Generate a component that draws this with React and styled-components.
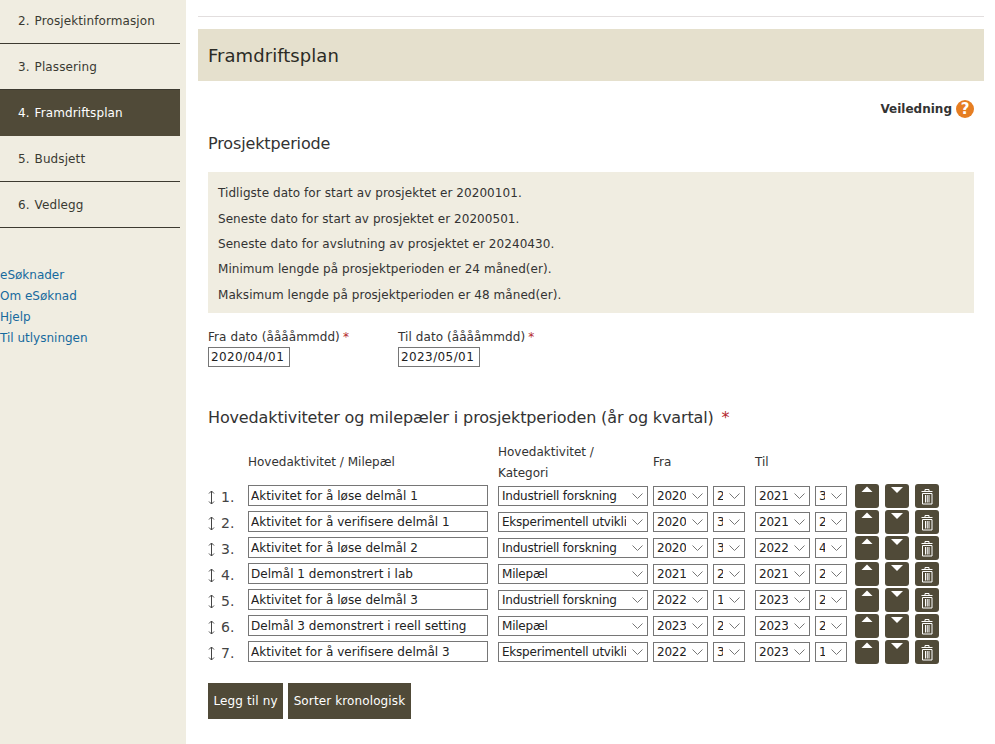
import React from "react";
import styled, { createGlobalStyle } from "styled-components";

const Global = createGlobalStyle`
  html, body { margin: 0; padding: 0; height: 744px; overflow: hidden; background: #fff; }
  body { font-family: "DejaVu Sans", Verdana, sans-serif; font-size: 12px; color: #333; }
  * { box-sizing: border-box; }
`;
const Page = styled.div`display: flex; height: 744px; overflow: hidden;`;
const Sidebar = styled.aside`width: 186px; flex: none; background: #f0ede1; height: 100%;`;
const Steps = styled.ul`list-style: none; margin: -2px 6px 0 0; padding: 0;`;
const Step = styled.li`
  height: 46px; display: flex; align-items: center; padding: 1px 0 0 18px;
  border-bottom: 1px solid ${p => (p.$active ? "#504a38" : "#3d3a30")};
  background: ${p => (p.$active ? "#504a38" : "transparent")};
  color: ${p => (p.$active ? "#fff" : "#3a3a32")};
  font-size: 12px; letter-spacing: .1px; word-spacing: 1px;
`;
const Links = styled.nav`display: flex; flex-direction: column; margin-top: 37px;`;
const SideLink = styled.a`color: #176a9e; line-height: 21px; font-size: 12px;`;
const Main = styled.main`flex: 1; padding: 16px 11px 0 12px; min-width: 0;`;
const TopRule = styled.div`border-top: 1px solid #e2dede; height: 13px;`;
const Banner = styled.h1`
  margin: 0; height: 52px; display: flex; align-items: center; padding-left: 10px;
  background: #e5e0cd; font-size: 18px; font-weight: 400; color: #2b2b25; letter-spacing: .05px;
`;
const Content = styled.div`padding: 0 10px;`;
const HelpRow = styled.div`display: flex; justify-content: flex-end; align-items: center; gap: 4px; height: 20px; margin-top: 18px;`;
const HelpText = styled.strong`font-size: 12px; color: #333;`;
const HelpIcon = styled.span`
  width: 18px; height: 18px; border-radius: 50%; background: #e67e22; color: #fff;
  display: flex; align-items: center; justify-content: center; font-weight: 700; font-size: 15px;
`;
const H2 = styled.h2`margin: ${p => p.$mt || 0}px 0 0; font-size: 16px; font-weight: 400; color: #333; line-height: 20px; letter-spacing: -.14px;`;
const InfoBox = styled.div`
  margin-top: 18px; background: #f0ede1; padding: 9.2px 10px 0; height: 141px;
`;
const InfoLine = styled.p`margin: 0; height: 25.4px; line-height: 25px; font-size: 12px; color: #333; letter-spacing: .06px;`;
const DateRow = styled.div`display: flex; gap: 108px; margin-top: 15px;`;
const DateField = styled.div`display: flex; flex-direction: column; width: 82px; white-space: nowrap;`;
const FieldLabel = styled.label`line-height: 19px; font-size: 12px; color: #333; letter-spacing: .08px;`;
const Star = styled.span`color: #b3282d; margin-left: 3px;`;
const TextInput = styled.input`
  font: 12px "DejaVu Sans", Verdana, sans-serif; color: #222; background: #fff; letter-spacing: .03px;
  border: 1px solid #767676; border-radius: 0; outline: none; padding: 0 2px;
  height: ${p => p.$h || 20}px; width: ${p => p.$w}px; flex: none; display: block;
`;
const DateInput = styled(TextInput)`letter-spacing: .4px;`;
const Row = styled.div`display: flex; align-items: center;`;
const HeadRow = styled(Row)`height: 44px; margin-top: 13px; align-items: flex-start;`;
const HeadCell = styled.div`
  width: ${p => p.$w}px; margin-left: ${p => p.$ml || 0}px; margin-top: ${p => p.$mt || 0}px; flex: none; line-height: 21px; font-size: 12px; color: #333;
`;
const ActRow = styled(Row)`height: 26px; align-items: flex-start;`;
const Num = styled.div`
  width: 40px; flex: none; height: 21px; display: flex; align-items: center; font-size: 14px; color: #444; padding-top: 3px;
`;
const Arrow = styled.svg`width: 7px; height: 15px; margin: 1px 6px 0 0; flex: none;`;
const SelectWrap = styled.div`position: relative; width: ${p => p.$w}px; height: 20px; margin-left: ${p => p.$ml}px; margin-top: 1px; flex: none;`;
const Select = styled.select`
  appearance: none; width: 100%; height: 100%; border: 1px solid #767676; border-radius: 0; background: #fff;
  font: 12px "DejaVu Sans", Verdana, sans-serif; color: #222; letter-spacing: -.22px; padding: 0 21px 0 3px; outline: none; display: block;
`;
const Chevron = styled.svg`position: absolute; right: 5px; top: 7px; width: 11px; height: 6px; pointer-events: none;`;
const IconBtn = styled.button`
  width: 24px; height: 24px; flex: none; margin-left: ${p => p.$ml}px; margin-top: -1px; padding: 0; border: 0;
  background: #504a38; border-radius: 3px; display: flex; justify-content: center; align-items: flex-start;
`;
const ButtonRow = styled.div`display: flex; gap: 5px; margin-top: 16px;`;
const Btn = styled.button`
  height: 36px; padding: 0 5.5px; border: 0; background: #504a38; color: #fff; letter-spacing: .12px;
  font: 12px "DejaVu Sans", Verdana, sans-serif;
`;

const Chev = () => (
  <Chevron viewBox="0 0 11 6"><path d="M.5.5 5.5 5.5 10.5.5" fill="none" stroke="#777" strokeWidth="1" /></Chevron>
);
const Sel = ({ w, ml, value }) => (
  <SelectWrap $w={w} $ml={ml}>
    <Select defaultValue={value}><option>{value}</option></Select>
    <Chev />
  </SelectWrap>
);
const DragArrow = () => (
  <Arrow viewBox="0 0 7 15">
    <path d="M3.5 1v13M1 3.5 3.5 1 6 3.5M1 11.5 3.5 14 6 11.5" fill="none" stroke="#444" strokeWidth="1" />
  </Arrow>
);
const Up = () => <svg width="24" height="12" viewBox="0 0 24 12"><path d="M6.5 8 12 2.5 17.5 8z" fill="#fff" /></svg>;
const Down = () => <svg width="24" height="12" viewBox="0 0 24 12"><path d="M6 3h12l-6 6z" fill="#fff" /></svg>;
const Trash = () => (
  <svg width="24" height="24" viewBox="0 0 24 24" fill="none" stroke="#fff" strokeWidth="1">
    <path d="M6.5 7.5h11M10 7.5V5.5h4v2M7.5 9.5h9.5v10.5h-9.5zM10.5 11v7.5M12.25 11v7.5M14 11v7.5" />
  </svg>
);

const rows = [
  ["Aktivitet for å løse delmål 1", "Industriell forskning", "2020", "2", "2021", "3"],
  ["Aktivitet for å verifisere delmål 1", "Eksperimentell utvikling", "2020", "3", "2021", "2"],
  ["Aktivitet for å løse delmål 2", "Industriell forskning", "2020", "3", "2022", "4"],
  ["Delmål 1 demonstrert i lab", "Milepæl", "2021", "2", "2021", "2"],
  ["Aktivitet for å løse delmål 3", "Industriell forskning", "2022", "1", "2023", "2"],
  ["Delmål 3 demonstrert i reell setting", "Milepæl", "2023", "2", "2023", "2"],
  ["Aktivitet for å verifisere delmål 3", "Eksperimentell utvikling", "2022", "3", "2023", "1"],
];
const info = [
  "Tidligste dato for start av prosjektet er 20200101.",
  "Seneste dato for start av prosjektet er 20200501.",
  "Seneste dato for avslutning av prosjektet er 20240430.",
  "Minimum lengde på prosjektperioden er 24 måned(er).",
  "Maksimum lengde på prosjektperioden er 48 måned(er).",
];

export default function App() {
  return (
    <Page>
      <Global />
      <Sidebar>
        <Steps>
          <Step>2. Prosjektinformasjon</Step>
          <Step>3. Plassering</Step>
          <Step $active>4. Framdriftsplan</Step>
          <Step>5. Budsjett</Step>
          <Step>6. Vedlegg</Step>
        </Steps>
        <Links>
          <SideLink>eSøknader</SideLink>
          <SideLink>Om eSøknad</SideLink>
          <SideLink>Hjelp</SideLink>
          <SideLink>Til utlysningen</SideLink>
        </Links>
      </Sidebar>
      <Main>
        <TopRule />
        <Banner>Framdriftsplan</Banner>
        <Content>
          <HelpRow><HelpText>Veiledning</HelpText><HelpIcon>?</HelpIcon></HelpRow>
          <H2 $mt={15}>Prosjektperiode</H2>
          <InfoBox>{info.map(t => <InfoLine key={t}>{t}</InfoLine>)}</InfoBox>
          <DateRow>
            <DateField>
              <FieldLabel>Fra dato (ååååmmdd)<Star>*</Star></FieldLabel>
              <DateInput $w={82} defaultValue="2020/04/01" />
            </DateField>
            <DateField>
              <FieldLabel>Til dato (ååååmmdd)<Star>*</Star></FieldLabel>
              <DateInput $w={82} defaultValue="2023/05/01" />
            </DateField>
          </DateRow>
          <H2 $mt={41}>Hovedaktiviteter og milepæler i prosjektperioden (år og kvartal) <Star>*</Star></H2>
          <HeadRow>
            <HeadCell $w={40} />
            <HeadCell $w={240} $mt={11}>Hovedaktivitet / Milepæl</HeadCell>
            <HeadCell $w={150} $ml={10} $mt={1}>Hovedaktivitet /<br />Kategori</HeadCell>
            <HeadCell $w={57} $ml={5} $mt={11}>Fra</HeadCell>
            <HeadCell $w={55} $ml={45} $mt={11}>Til</HeadCell>
          </HeadRow>
          {rows.map((r, i) => (
            <ActRow key={i}>
              <Num><DragArrow />{i + 1}.</Num>
              <TextInput $w={240} $h={21} defaultValue={r[0]} />
              <Sel w={150} ml={10} value={r[1]} />
              <Sel w={55} ml={5} value={r[2]} />
              <Sel w={32} ml={5} value={r[3]} />
              <Sel w={55} ml={10} value={r[4]} />
              <Sel w={32} ml={5} value={r[5]} />
              <IconBtn $ml={8}><Up /></IconBtn>
              <IconBtn $ml={6}><Down /></IconBtn>
              <IconBtn $ml={6}><Trash /></IconBtn>
            </ActRow>
          ))}
          <ButtonRow>
            <Btn>Legg til ny</Btn>
            <Btn>Sorter kronologisk</Btn>
          </ButtonRow>
        </Content>
      </Main>
    </Page>
  );
}
